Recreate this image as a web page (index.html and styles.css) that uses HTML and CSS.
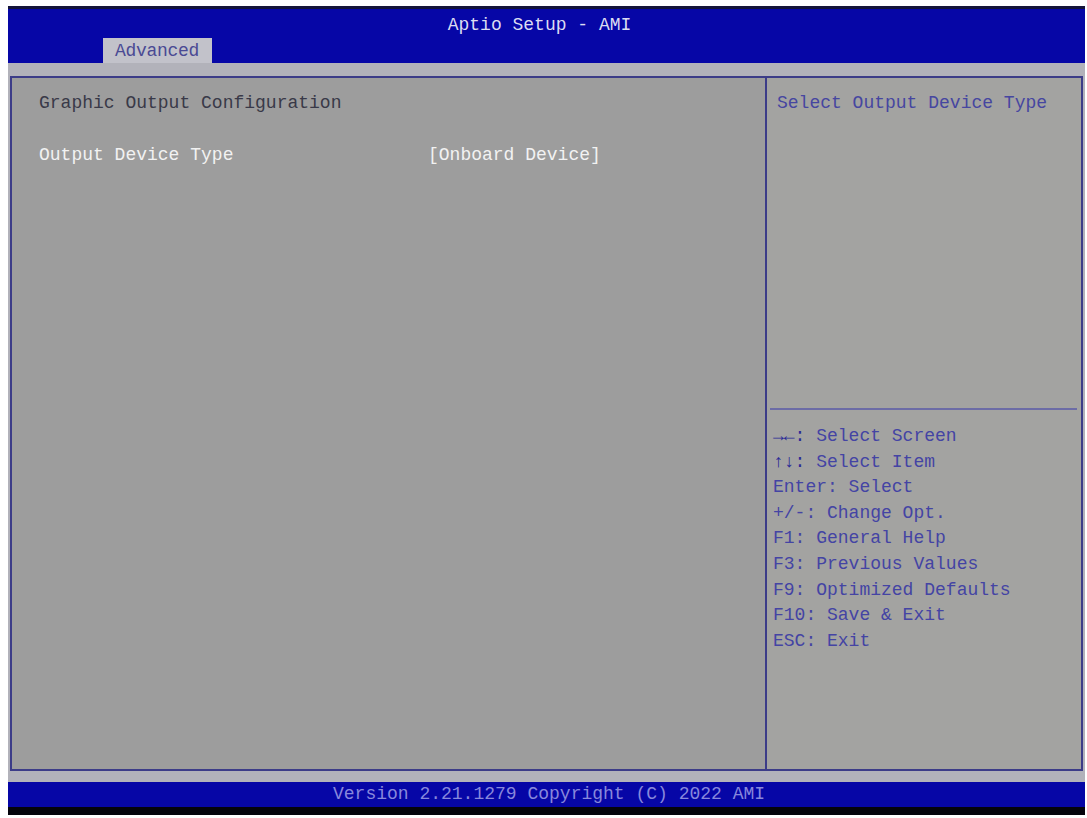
FILE: index.html
```html
<!DOCTYPE html>
<html lang="en">
<head>
  <meta charset="UTF-8">
  <title>Aptio Setup - AMI</title>
  <link rel="stylesheet" href="styles.css">
</head>
<body>
  <div class="screen">
    <!-- Title bar with tabs -->
    <header class="topbar">
      <div class="title">Aptio Setup - AMI</div>
      <div class="tabs">
        <span class="tab active">Advanced</span>
      </div>
    </header>

    <div class="panel">
      <div class="settings">
        <div class="row heading">Graphic Output Configuration</div>
        <div class="row blank"></div>
        <div class="row item">
          <span class="label">Output Device Type</span>
          <span class="value">[Onboard Device]</span>
        </div>
      </div>

      <aside class="side">
        <div class="help">Select Output Device Type</div>
        <ul class="keys">
          <li><b>→←:</b> Select Screen</li>
          <li><b>↑↓:</b> Select Item</li>
          <li>Enter: Select</li>
          <li>+/-: Change Opt.</li>
          <li>F1: General Help</li>
          <li>F3: Previous Values</li>
          <li>F9: Optimized Defaults</li>
          <li>F10: Save &amp; Exit</li>
          <li>ESC: Exit</li>
        </ul>
      </aside>
    </div>

    <footer class="footer">Version 2.21.1279 Copyright (C) 2022 AMI</footer>
  </div>
</body>
</html>
```

FILE: styles.css
```css
* {
  margin: 0;
  padding: 0;
  box-sizing: border-box;
}

body {
  background: #ffffff;
  font-family: 'Liberation Mono', 'DejaVu Sans Mono', monospace;
  font-size: 18px;
  height: 818px;
  overflow: hidden;
}

.screen {
  margin: 6px 2px 0 8px;
  width: 1077px;
  height: 809px;
  background: #b2b2ba;
  display: flex;
  flex-direction: column;
}

.topbar {
  height: 57px;
  background: #0606a6;
  border-top: 3px solid #14143a;
  display: flex;
  flex-direction: column;
}

.title {
  height: 29px;
  padding-top: 4px;
  line-height: 25px;
  text-align: center;
  color: #dcdcf2;
  padding-right: 14px;
}

.tabs {
  display: flex;
  height: 25px;
  padding-left: 95px;
}

.tab {
  width: 109px;
  height: 25px;
  line-height: 26px;
  padding-left: 12px;
  background: #c2c2ca;
  color: #4a4a94;
  white-space: nowrap;
  letter-spacing: -0.3px;
}

.panel {
  margin: 13px 2px 11px 2px;
  height: 695px;
  border: 2px solid #3c3c88;
  display: flex;
}

.settings {
  width: 755px;
  background: #9d9d9d;
  padding: 12px 0 0 27px;
  border-right: 2px solid #3c3c88;
}

.row {
  height: 26px;
  line-height: 26px;
  white-space: nowrap;
}

.heading {
  color: #393948;
}

.item {
  display: flex;
  color: #f2f2f2;
}

.label {
  width: 389px;
}

.side {
  flex: 1;
  background: #a3a3a1;
  display: flex;
  flex-direction: column;
}

.help {
  height: 332px;
  padding: 12px 0 0 7px;
  line-height: 26px;
  color: #4646a0;
  border-bottom: 2px solid #6c6ca6;
  margin: 0 4px 0 3px;
}

.keys {
  list-style: none;
  padding: 14px 0 0 6px;
  color: #4444a4;
}

.keys li {
  height: 25.6px;
  line-height: 25.6px;
  white-space: nowrap;
}

.keys b {
  font-weight: normal;
  color: #2a2a96;
}

.footer {
  height: 33px;
  background: #0606a6;
  border-bottom: 8px solid #04040c;
  line-height: 25px;
  color: #8888dc;
  padding-left: 325px;
  white-space: nowrap;
}
```
